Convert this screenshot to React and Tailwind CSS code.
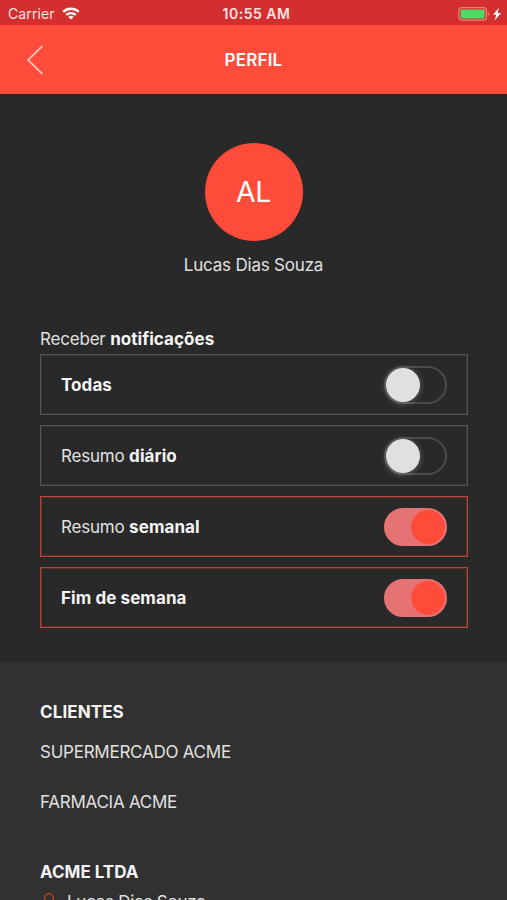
import React, { useState } from 'react';
import { clsx } from 'clsx';

const initialOptions = [
  { id: 'all', text: '', strong: 'Todas', enabled: false },
  { id: 'daily', text: 'Resumo ', strong: 'diário', enabled: false },
  { id: 'weekly', text: 'Resumo ', strong: 'semanal', enabled: true },
  { id: 'weekend', text: '', strong: 'Fim de semana', enabled: true },
];

const clients = ['SUPERMERCADO ACME', 'FARMACIA ACME'];

const StatusBar = () => (
  <div className="h-[25px] shrink-0 bg-[#d32f2f] grid grid-cols-3 items-center pl-2 pr-[5px] pt-[2px] text-[#fbe4e2]">
    <div className="flex items-center gap-[7px]">
      <span className="text-[14px] leading-5 tracking-[0.1px]">Carrier</span>
      <svg width="18" height="13" viewBox="0 0 18 13" fill="none" stroke="#fff" strokeWidth="2.3">
        <path d="M1.2 4.9a11.2 11.2 0 0 1 15.6 0" />
        <path d="M4.2 8a6.9 6.9 0 0 1 9.6 0" />
        <path d="M9 12.6 6.3 10a3.8 3.8 0 0 1 5.4 0Z" fill="#fff" stroke="none" />
      </svg>
    </div>
    <span className="text-center text-[14px] leading-5 font-semibold tracking-[0.5px] pl-[3px]">10:55 AM</span>
    <div className="flex items-center justify-end">
      <svg width="44" height="14" viewBox="0 0 44 14">
        <rect x="0.8" y="0.6" width="27.6" height="12.6" rx="3" fill="none" stroke="#ea8378" strokeWidth="1.2" />
        <rect x="2.6" y="2.4" width="24" height="9" rx="1" fill="#4cd964" />
        <path d="M29.8 5v4c2-.6 2-3.4 0-4Z" fill="#ea8378" />
        <path d="M41 .5 35 7.8h3.3l-1.600 5.700 6.400-7.400h-3.600Z" fill="#fff" />
      </svg>
    </div>
  </div>
);

const Header = () => (
  <header className="h-[69px] shrink-0 bg-[#ff4b3a] grid grid-cols-3 items-center text-white">
    <button className="ml-[27px] w-[18px]" aria-label="Voltar">
      <svg width="18" height="32" viewBox="0 0 18 32" fill="none" stroke="#ffc4bc" strokeWidth="1.8">
        <path d="M15.5 1.8 1 16l14.5 14.2" />
      </svg>
    </button>
    <h1 className="text-center text-[17px] font-semibold tracking-[0.2px] pt-0.5">PERFIL</h1>
  </header>
);

const Toggle = ({ enabled, onChange }) => (
  <button
    role="switch"
    aria-checked={enabled}
    onClick={onChange}
    className={clsx(
      'w-[63px] h-[38px] rounded-full flex items-center border-2',
      enabled ? 'bg-[#e57373] border-[#e57373] justify-end' : 'border-[#4a4a4a] justify-start'
    )}
  >
    <span
      className={clsx(
        'w-[34px] h-[34px] rounded-full',
        enabled ? 'bg-[#ff4b3a]' : 'bg-[#e0e0e0] shadow-[0_1px_6px_rgba(224,224,224,0.35)]'
      )}
    />
  </button>
);

const OptionRow = ({ option, onChange }) => (
  <div
    className={clsx(
      'h-[61px] border flex items-center justify-between px-5',
      option.enabled
        ? 'border-[#b5443a] shadow-[inset_0_0_0_1px_#5e302c]'
        : 'border-[#545454] shadow-[inset_0_0_0_1px_#363636]'
    )}
  >
    <span className="text-[17px] tracking-[-0.2px] pt-[3px]">
      {option.text}
      <strong className="font-bold tracking-[0.08px] text-[#f5f5f5]">{option.strong}</strong>
    </span>
    <Toggle enabled={option.enabled} onChange={onChange} />
  </div>
);

const App = () => {
  const [options, setOptions] = useState(initialOptions);

  const toggle = (id) =>
    setOptions(options.map((o) => (o.id === id ? { ...o, enabled: !o.enabled } : o)));

  return (
    <div className="h-[900px] w-full overflow-hidden flex flex-col bg-[#292929] text-[#e0e0e0] font-['Inter',sans-serif]">
      <StatusBar />
      <Header />

      {/* Avatar and name */}
      <section className="flex flex-col items-center pt-[48.5px] shrink-0">
        <div className="w-[98px] h-[98px] rounded-full bg-[#ff4b3a] text-white text-[28.5px] tracking-[-0.5px] pt-0.5 flex items-center justify-center">
          AL
        </div>
        <p className="mt-[12.5px] text-[17px] leading-6 tracking-[-0.2px]">Lucas Dias Souza</p>
      </section>

      {/* Notification settings */}
      <section className="px-10 pt-[50px] pb-[34px] shrink-0">
        <p className="text-[17px] leading-6 mb-[3px] tracking-[-0.2px]">
          Receber <strong className="font-bold tracking-[0.05px] text-[#f5f5f5]">notificações</strong>
        </p>
        <div className="flex flex-col gap-[10px] -mr-px">
          {options.map((option) => (
            <OptionRow key={option.id} option={option} onChange={() => toggle(option.id)} />
          ))}
        </div>
      </section>

      {/* Clients */}
      <section className="bg-[#313131] px-10 pt-[38px] flex-1 text-[17px] leading-6 tracking-[-0.25px]">
        <h2 className="font-bold text-[#f5f5f5] tracking-[0.1px]">CLIENTES</h2>
        <ul className="mt-4 flex flex-col gap-[26px]">
          {clients.map((client) => (
            <li key={client}>{client}</li>
          ))}
        </ul>
        <h2 className="mt-[46px] font-bold text-[#f5f5f5] tracking-[0px]">ACME LTDA</h2>
        <div className="mt-[6px] flex items-center gap-[9px]">
          <svg width="18" height="18" viewBox="0 0 18 18" fill="none" stroke="#c8452f" strokeWidth="1.3">
            <ellipse cx="9" cy="5.5" rx="4.3" ry="4.9" />
            <path d="M1.5 17c0-4 3-6 7.5-6s7.5 2 7.5 6Z" />
          </svg>
          <span>Lucas Dias Souza</span>
        </div>
      </section>
    </div>
  );
};

export default App;
